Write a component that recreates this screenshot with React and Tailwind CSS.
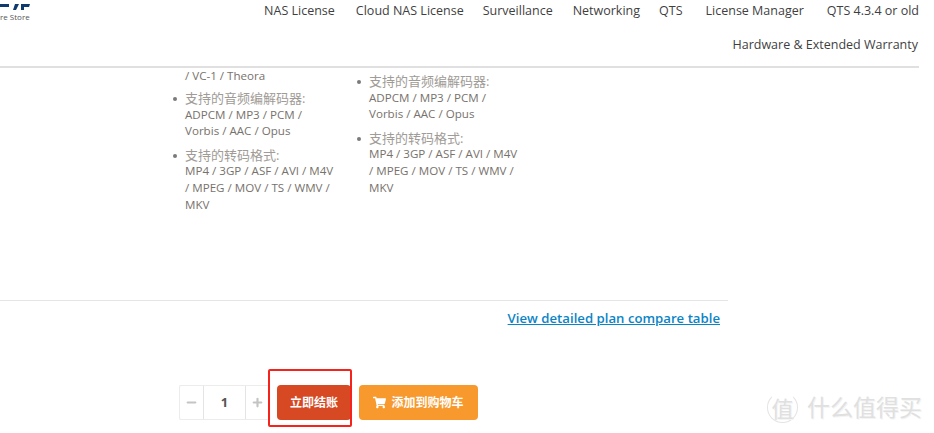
import { Minus, Plus } from "lucide-react";
import { FaShoppingCart } from "react-icons/fa";

const navTop = [
  { label: "NAS License", gap: "mr-[21px]" },
  { label: "Cloud NAS License", gap: "mr-[19px]" },
  { label: "Surveillance", gap: "mr-[20px]" },
  { label: "Networking", gap: "mr-[19px]" },
  { label: "QTS", gap: "mr-[23px]" },
  { label: "License Manager", gap: "mr-[23px]" },
  { label: "QTS 4.3.4 or old", gap: "" },
];

function Spec({ title, lines }) {
  return (
    <li className="flex">
      <span className="w-[12px] shrink-0 pt-[7px]">
        <span className="block w-[4px] h-[4px] rounded-full bg-[#7a7a7a]"></span>
      </span>
      <div className="mb-[7px]">
        <div className="text-[13px] whitespace-nowrap text-[#a09b96]">{title}</div>
        {lines.map((l, i) => (
          <div key={i}>{l}</div>
        ))}
      </div>
    </li>
  );
}

function Specs() {
  return (
    <>
      <Spec title="支持的音频编解码器:" lines={["ADPCM / MP3 / PCM /", "Vorbis / AAC / Opus"]} />
      <Spec title="支持的转码格式:" lines={["MP4 / 3GP / ASF / AVI / M4V", "/ MPEG / MOV / TS / WMV /", "MKV"]} />
    </>
  );
}

export default function App() {
  return (
    <div
      className="relative w-[934px] h-[433px] overflow-hidden bg-white"
      style={{ fontFamily: '"Open Sans", "Noto Sans CJK SC", sans-serif' }}
    >
      {/* header */}
      <div className="w-[919px] h-[68px] border-b-2 border-[#e0e0e0] flex justify-between">
        <div className="w-[40px] overflow-hidden">
          <svg width="30" height="9" viewBox="0 0 30 9" className="mt-[4px] block">
            <path d="M0 0H9V3H0Z M15 0H19L16 6H13Z M21 0H30L29 3H24V6H21Z" fill="#0f3a6e" />
          </svg>
          <div className="text-[8px] leading-[10px] text-[#555] whitespace-nowrap -mt-[1px]">re Store</div>
        </div>
        <div className="text-[12.5px] text-[#3f3f3f] pt-[1px]">
          <div className="flex justify-end h-[20px] leading-[20px] whitespace-nowrap w-[654px]">
            {navTop.map((n) => (
              <span key={n.label} className={n.gap}>{n.label}</span>
            ))}
          </div>
          <div className="text-right leading-[20px] mt-[14px] mr-[1px]">Hardware &amp; Extended Warranty</div>
        </div>
      </div>

      {/* plan specs */}
      <div className="h-[233px] w-[728px] border-b border-[#e5e5e5] pl-[173px] flex text-[11.6px] leading-[16.6px] text-[#77726c]">
        <ul className="w-[184px]">
          <li className="pl-[12px] mb-[6px] -mt-[0.5px]">/ VC-1 / Theora</li>
          <Specs />
        </ul>
        <ul className="w-[170px] pt-[5px]">
          <Specs />
        </ul>
      </div>

      <div className="w-[728px] pr-[8px] pt-[4px] text-right">
        <a className="text-[13.2px] leading-[20px] font-semibold text-[#0a84c6] underline">View detailed plan compare table</a>
      </div>

      {/* quantity + buttons */}
      <div className="flex items-center ml-[179px] mt-[56px]">
        <div className="flex h-[35px] border border-r-0 border-[#ececec] rounded-[2px] text-[#c4c4c4]">
          <span className="w-[24px] flex items-center justify-center border-r border-[#e4e4e4]">
            <Minus size={13} strokeWidth={4} />
          </span>
          <span className="w-[42px] flex items-center justify-center text-[13px] font-bold text-[#555] border-r border-[#e4e4e4]">1</span>
          <span className="w-[23px] flex items-center justify-center">
            <Plus size={13} strokeWidth={4} />
          </span>
        </div>
        <button className="ml-[8px] w-[74px] h-[35px] rounded-[4px] bg-[#d64923] text-white text-[12px] font-bold">立即结账</button>
        <button className="ml-[8px] w-[119px] h-[35px] rounded-[4px] bg-[#f7992c] text-white text-[12px] font-bold flex items-center justify-center gap-[5px]">
          <FaShoppingCart size={13} />
          添加到购物车
        </button>
      </div>

      {/* red annotation box */}
      <div className="absolute left-[268px] top-[369px] w-[84px] h-[58px] border-2 border-[#f5231c] rounded-[2px]"></div>

      {/* watermark */}
      <div className="absolute left-[767px] top-[392px] flex items-center text-[#e0e0e0] select-none [text-shadow:1px_1px_0_#f4f4f4]">
        <span className="w-[31px] h-[31px] rounded-full border border-[#e4e4e4] border-t-transparent flex items-center justify-center text-[22px] leading-none">值</span>
        <span className="ml-[9px] text-[23px] leading-none">什么值得买</span>
      </div>
    </div>
  );
}
